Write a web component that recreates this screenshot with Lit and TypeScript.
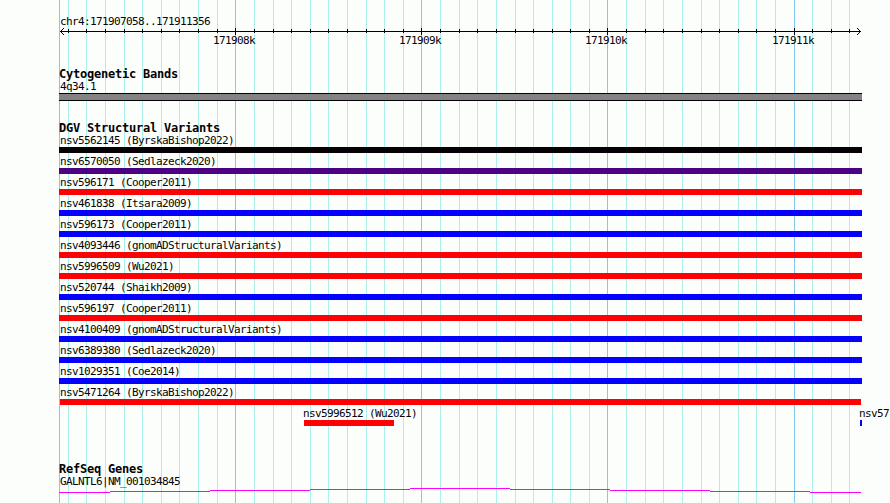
import { LitElement, html, svg, css } from "lit";
import { customElement, property } from "lit/decorators.js";
import { styleMap } from "lit/directives/style-map.js";

const START = 59;
const END = 862;

const MINOR = [
  68, 86, 105, 124, 142, 161, 179, 198, 217, 254, 273, 291, 310, 328, 347, 366,
  384, 403, 440, 459, 477, 496, 515, 533, 552, 570, 589, 626, 645, 663, 682,
  701, 719, 738, 756, 775, 812, 831, 849,
];

const MAJOR = [
  { x: 235, label: "171908k" },
  { x: 421, label: "171909k" },
  { x: 607, label: "171910k" },
  { x: 794, label: "171911k" },
];

interface Variant {
  name: string;
  color: string;
  from?: number;
  to?: number;
}

const VARIANTS: Variant[] = [
  { name: "nsv5562145 (ByrskaBishop2022)", color: "#040004" },
  { name: "nsv6570050 (Sedlazeck2020)", color: "#4c0284" },
  { name: "nsv596171 (Cooper2011)", color: "#fc0204" },
  { name: "nsv461838 (Itsara2009)", color: "#0402fc" },
  { name: "nsv596173 (Cooper2011)", color: "#0402fc" },
  { name: "nsv4093446 (gnomADStructuralVariants)", color: "#fc0204" },
  { name: "nsv5996509 (Wu2021)", color: "#fc0204" },
  { name: "nsv520744 (Shaikh2009)", color: "#0402fc" },
  { name: "nsv596197 (Cooper2011)", color: "#fc0204" },
  { name: "nsv4100409 (gnomADStructuralVariants)", color: "#0402fc" },
  { name: "nsv6389380 (Sedlazeck2020)", color: "#0402fc" },
  { name: "nsv1029351 (Coe2014)", color: "#0402fc" },
  { name: "nsv5471264 (ByrskaBishop2022)", color: "#fc0204", from: 60, to: 861 },
];

const SHORT_VARIANTS: Variant[] = [
  { name: "nsv5996512 (Wu2021)", color: "#fc0204", from: 304, to: 394 },
  { name: "nsv57", color: "#0402fc", from: 860, to: 862 },
];

@customElement("track-feature")
export class TrackFeature extends LitElement {
  @property() name = "";
  @property() color = "";
  @property({ type: Number }) from = START;
  @property({ type: Number }) to = END;

  static styles = css`
    :host {
      display: block;
      grid-area: 1 / 1;
      height: 21px;
    }

    .label {
      height: 13px;
      white-space: pre;
    }

    .bar {
      height: 6px;
    }
  `;

  render() {
    // labels never start left of the ruler
    const labelX = Math.max(this.from - 1, START + 1);
    return html`
      <div class="label" style=${styleMap({ marginLeft: `${labelX}px` })}>${this.name}</div>
      <div
        class="bar"
        style=${styleMap({
          marginLeft: `${this.from}px`,
          width: `${this.to - this.from}px`,
          background: this.color,
        })}
      ></div>
    `;
  }
}

@customElement("app-root")
export class AppRoot extends LitElement {
  static styles = css`
    :host {
      display: grid;
      width: 890px;
      height: 503px;
      overflow: hidden;
      background: #fcfefc;
      color: #040204;
      font: 11px/13px "DejaVu Sans Mono", monospace;
      letter-spacing: -0.62px;
    }

    .grid,
    .tracks {
      grid-area: 1 / 1;
      min-width: 0;
    }

    svg {
      display: block;
      shape-rendering: crispEdges;
    }

    .minor {
      fill: #acf0ec;
    }

    .major {
      fill: #84c8ec;
    }

    .tracks {
      z-index: 1;
      padding-top: 15px;
    }

    .label {
      height: 13px;
      margin-left: 60px;
    }

    .ruler text {
      fill: #040204;
    }

    h2 {
      height: 12px;
      margin: 0 0 0 59px;
      font-size: 12px;
      font-weight: bold;
      line-height: 12px;
      letter-spacing: -0.22px;
    }

    .bands {
      margin-top: 20px;
    }

    .band {
      box-sizing: border-box;
      width: 803px;
      height: 8px;
      margin-left: 59px;
      background: #848284;
      border: solid #040204;
      border-width: 1px 0;
    }

    .variants {
      margin-top: 21px;
    }

    .row {
      display: grid;
      width: 890px;
      height: 21px;
      overflow: hidden;
    }

    .genes {
      margin-top: 35px;
    }

    .gene {
      fill: none;
      stroke: #fc02fc;
    }
  `;

  gridLines() {
    return html`
      <svg class="grid" width="890" height="503">
        ${MINOR.map((x) => svg`<rect class="minor" x=${x} width="1" height="503" />`)}
        <rect class="major" x="59" width="1" height="503" />
        ${MAJOR.map((t) => svg`<rect class="major" x=${t.x} width="1" height="503" />`)}
      </svg>
    `;
  }

  ruler() {
    return html`
      <svg class="ruler" width="890" height="20">
        <rect x="60" y="3" width="801" height="1" />
        ${MINOR.map((x) => svg`<rect x=${x} y="1" width="1" height="4" />`)}
        ${MAJOR.map(
          (t) => svg`
            <rect x=${t.x} y="0" width="1" height="7" />
            <text x=${t.x - 22} y="16">${t.label}</text>
          `
        )}
        <path
          d="M61 2h1v1h-1zM62 1h1v1h-1zM63 0h1v1h-1zM61 4h1v1h-1zM62 5h1v1h-1zM63 6h1v1h-1z
             M859 2h1v1h-1zM858 1h1v1h-1zM857 0h1v1h-1zM859 4h1v1h-1zM858 5h1v1h-1zM857 6h1v1h-1z"
        />
      </svg>
    `;
  }

  feature(v: Variant) {
    return html`<track-feature
      .name=${v.name}
      .color=${v.color}
      .from=${v.from ?? START}
      .to=${v.to ?? END}
    ></track-feature>`;
  }

  render() {
    return html`
      ${this.gridLines()}
      <div class="tracks">
        <div class="label">chr4:171907058..171911356</div>
        ${this.ruler()}

        <section class="bands">
          <h2>Cytogenetic Bands</h2>
          <div class="label">4q34.1</div>
          <div class="band"></div>
        </section>

        <section class="variants">
          <h2>DGV Structural Variants</h2>
          ${VARIANTS.map((v) => html`<div class="row">${this.feature(v)}</div>`)}
          <div class="row">${SHORT_VARIANTS.map((v) => this.feature(v))}</div>
        </section>

        <section class="genes">
          <h2>RefSeq Genes</h2>
          <div class="label">GALNTL6|NM_001034845</div>
          <svg width="890" height="8">
            <path
              class="gene"
              d="M59 4.5H110M110 3.5H210M210 2.5H310M310 1.5H410M410 0.5H510M510 1.5H610M610 2.5H710M710 3.5H810M810 4.5H861"
            />
          </svg>
        </section>
      </div>
    `;
  }
}
